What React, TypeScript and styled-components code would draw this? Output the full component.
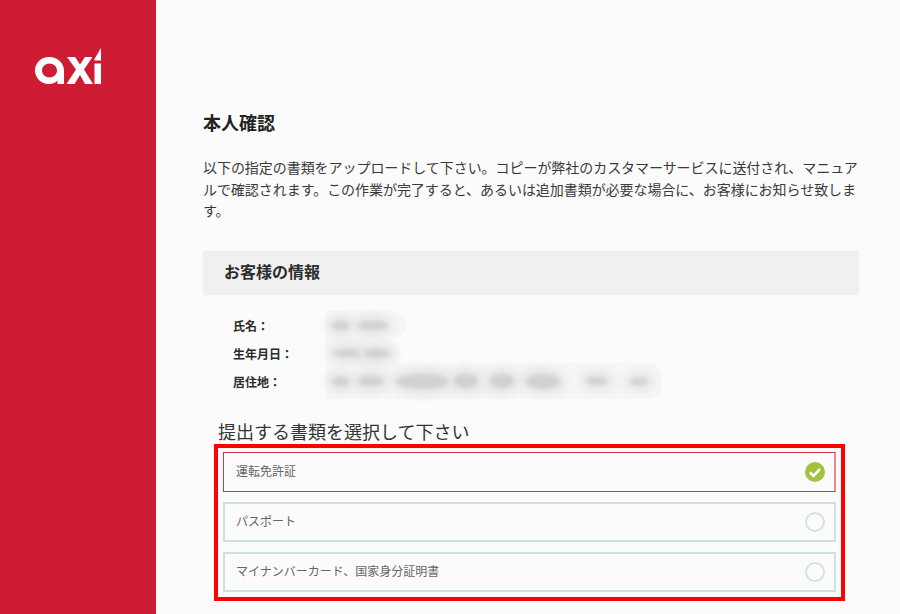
import React from 'react';
import styled, { createGlobalStyle } from 'styled-components';

const GlobalStyle = createGlobalStyle`
html, body {
    margin: 0;
    padding: 0;
    height: 614px;
    overflow: hidden;
    background: #fbfbfb;
    font-family: "Liberation Sans", "Noto Sans CJK JP", sans-serif;
}
`

const infoRows = [
    { label: '氏名：', width: 80, height: 28, blobs: [[0, 18, 9], [8, 30, 9]] },
    { label: '生年月日：', width: 74, height: 28, blobs: [[2, 30, 8], [0, 26, 9]] },
    { label: '居住地：', width: 336, height: 36, blobs: [[0, 18, 9], [8, 26, 10], [12, 54, 15], [4, 24, 14], [12, 24, 14], [12, 34, 15], [26, 22, 8], [22, 18, 7]] },
];

const documents = ['運転免許証', 'パスポート', 'マイナンバーカード、国家身分証明書'];

const Logo: React.FC = () => (
    <LogoSvg viewBox="0 0 66 36" width="66" height="36" aria-label="axi">
        <path
            fillRule="evenodd"
            d="M14 9C6 9 0 15 0 22.500C0 30 6 36 14 36C18 36 20.500 34.500 22.500 32.500V36H29V22.500C29 15 22.500 9 14 9ZM14.500 15.500C18.500 15.500 22 18.500 22 22.500C22 26.500 18.500 29.500 14.500 29.500C10.500 29.500 7 26.500 7 22.500C7 18.500 10.500 15.500 14.500 15.500Z"
        />
        <path d="M32 9H40L45 16.500L50 9H57.500L49 21.500L58 36H50L45 27L39.500 36H31.500L41 21.500Z" />
        <path d="M59.500 15.500H66V36H59.500ZM59.500 11L66 0V12.500H59.500Z" />
    </LogoSvg>
);

const App: React.FC = () => {
    return (
        <Page>
            <GlobalStyle />
            <Sidebar>
                <Logo />
            </Sidebar>
            <Main>
                <Heading>本人確認</Heading>
                <Intro>
                    以下の指定の書類をアップロードして下さい。コピーが弊社のカスタマーサービスに送付され、マニュア<br />
                    ルで確認されます。この作業が完了すると、あるいは追加書類が必要な場合に、お客様にお知らせ致しま<br />
                    す。
                </Intro>
                <Panel>お客様の情報</Panel>
                <InfoList>
                    {infoRows.map((row) => (
                        <InfoRow key={row.label}>
                            <InfoLabel>{row.label}</InfoLabel>
                            <Redacted $width={row.width} $height={row.height}>
                                {row.blobs.map(([gap, width, height], i) => (
                                    <Blob key={i} $gap={gap} $width={width} $height={height} />
                                ))}
                            </Redacted>
                        </InfoRow>
                    ))}
                </InfoList>
                <ChooseTitle>提出する書類を選択して下さい</ChooseTitle>
                <Highlight>
                    {documents.map((doc, i) => (
                        <DocOption key={doc} $selected={i === 0}>
                            <DocName>{doc}</DocName>
                            <Radio $selected={i === 0}>
                                {i === 0 && (
                                    <svg viewBox="0 0 20 20" width="20" height="20">
                                        <path d="M5 10.500L8.500 14L15 7" fill="none" stroke="#fff" strokeWidth="2.600" />
                                    </svg>
                                )}
                            </Radio>
                        </DocOption>
                    ))}
                </Highlight>
            </Main>
        </Page>
    )
}
export default App

const Page = styled.div`
    display: flex;
    width: 900px;
    height: 614px;
    overflow: hidden;
`
const Sidebar = styled.aside`
    flex: 0 0 156px;
    background: #cf1c35;
    padding: 48px 0 0 35px;
    box-sizing: border-box;
`
const LogoSvg = styled.svg`
    display: block;
    fill: #ffffff;
`
const Main = styled.main`
    flex: 1;
    padding: 112px 41px 0 47px;
    color: #333333;
`
const Heading = styled.h1`
    margin: 0;
    font-size: 18px;
    line-height: 24px;
    font-weight: 700;
    color: #222222;
`
const Intro = styled.p`
    margin: 22px 0 0;
    font-size: 14px;
    line-height: 21.5px;
    letter-spacing: -0.05px;
    white-space: nowrap;
    color: #3a3a3a;
`
const Panel = styled.div`
    margin-top: 28.5px;
    height: 44px;
    box-sizing: border-box;
    padding: 0 0 5px 21px;
    display: flex;
    align-items: center;
    background: #f0f0f0;
    border-radius: 3px;
    box-shadow: 0 0 1px #e6e6e6;
    font-size: 16px;
    font-weight: 700;
    color: #2b2b2b;
`
const InfoList = styled.div`
    margin-top: 16px;
    padding-left: 30px;
    display: flex;
    flex-direction: column;
`
const InfoRow = styled.div`
    display: flex;
    align-items: center;
    height: 28px;
`
const InfoLabel = styled.div`
    flex: 0 0 93px;
    font-size: 12px;
    font-weight: 700;
    color: #2b2b2b;
`
const Redacted = styled.div<{ $width: number; $height: number }>`
    display: flex;
    align-items: center;
    box-sizing: border-box;
    flex: 0 0 auto;
    width: ${(p) => p.$width}px;
    height: ${(p) => p.$height}px;
    padding-left: 6px;
    background: #f6f6f6;
    border-radius: 0 14px 14px 0;
`
const Blob = styled.div<{ $gap: number; $width: number; $height: number }>`
    flex: 0 0 auto;
    margin-left: ${(p) => p.$gap}px;
    width: ${(p) => p.$width}px;
    height: ${(p) => p.$height}px;
    border-radius: 50%;
    background: #d2d1d0;
    box-shadow: 0 0 8px 6px #e6e5e4;
    filter: blur(2px);
`
const ChooseTitle = styled.div`
    margin: 28px 0 0 15px;
    font-size: 18px;
    line-height: 21px;
    color: #333333;
`
const Highlight = styled.div`
    margin: 0 0 0 11px;
    width: 631px;
    height: 157px;
    box-sizing: border-box;
    border: 4px solid #ff0000;
    padding: 4px 5px 0;
    display: flex;
    flex-direction: column;
    gap: 10px;
`
const DocOption = styled.div<{ $selected: boolean }>`
    height: 40px;
    box-sizing: border-box;
    display: flex;
    align-items: center;
    justify-content: space-between;
    padding: ${(p) => (p.$selected ? '0 9px 0 12px' : '0 9px 0 11px')};
    border: ${(p) => (p.$selected ? '1px solid #d5334f' : '2px solid #cfe0e0')};
    border-right: ${(p) => (p.$selected ? '2px solid #e58a99' : '2px solid #cfe0e0')};
    font-size: 12px;
    color: #666666;
`
const DocName = styled.span`
    padding-bottom: 3px;
`
const Radio = styled.div<{ $selected: boolean }>`
    width: 20px;
    height: 20px;
    box-sizing: border-box;
    border-radius: 50%;
    display: flex;
    align-items: center;
    justify-content: center;
    background: ${(p) => (p.$selected ? '#a4c142' : 'transparent')};
    border: ${(p) => (p.$selected ? 'none' : '2px solid #d2e2e6')};
`
